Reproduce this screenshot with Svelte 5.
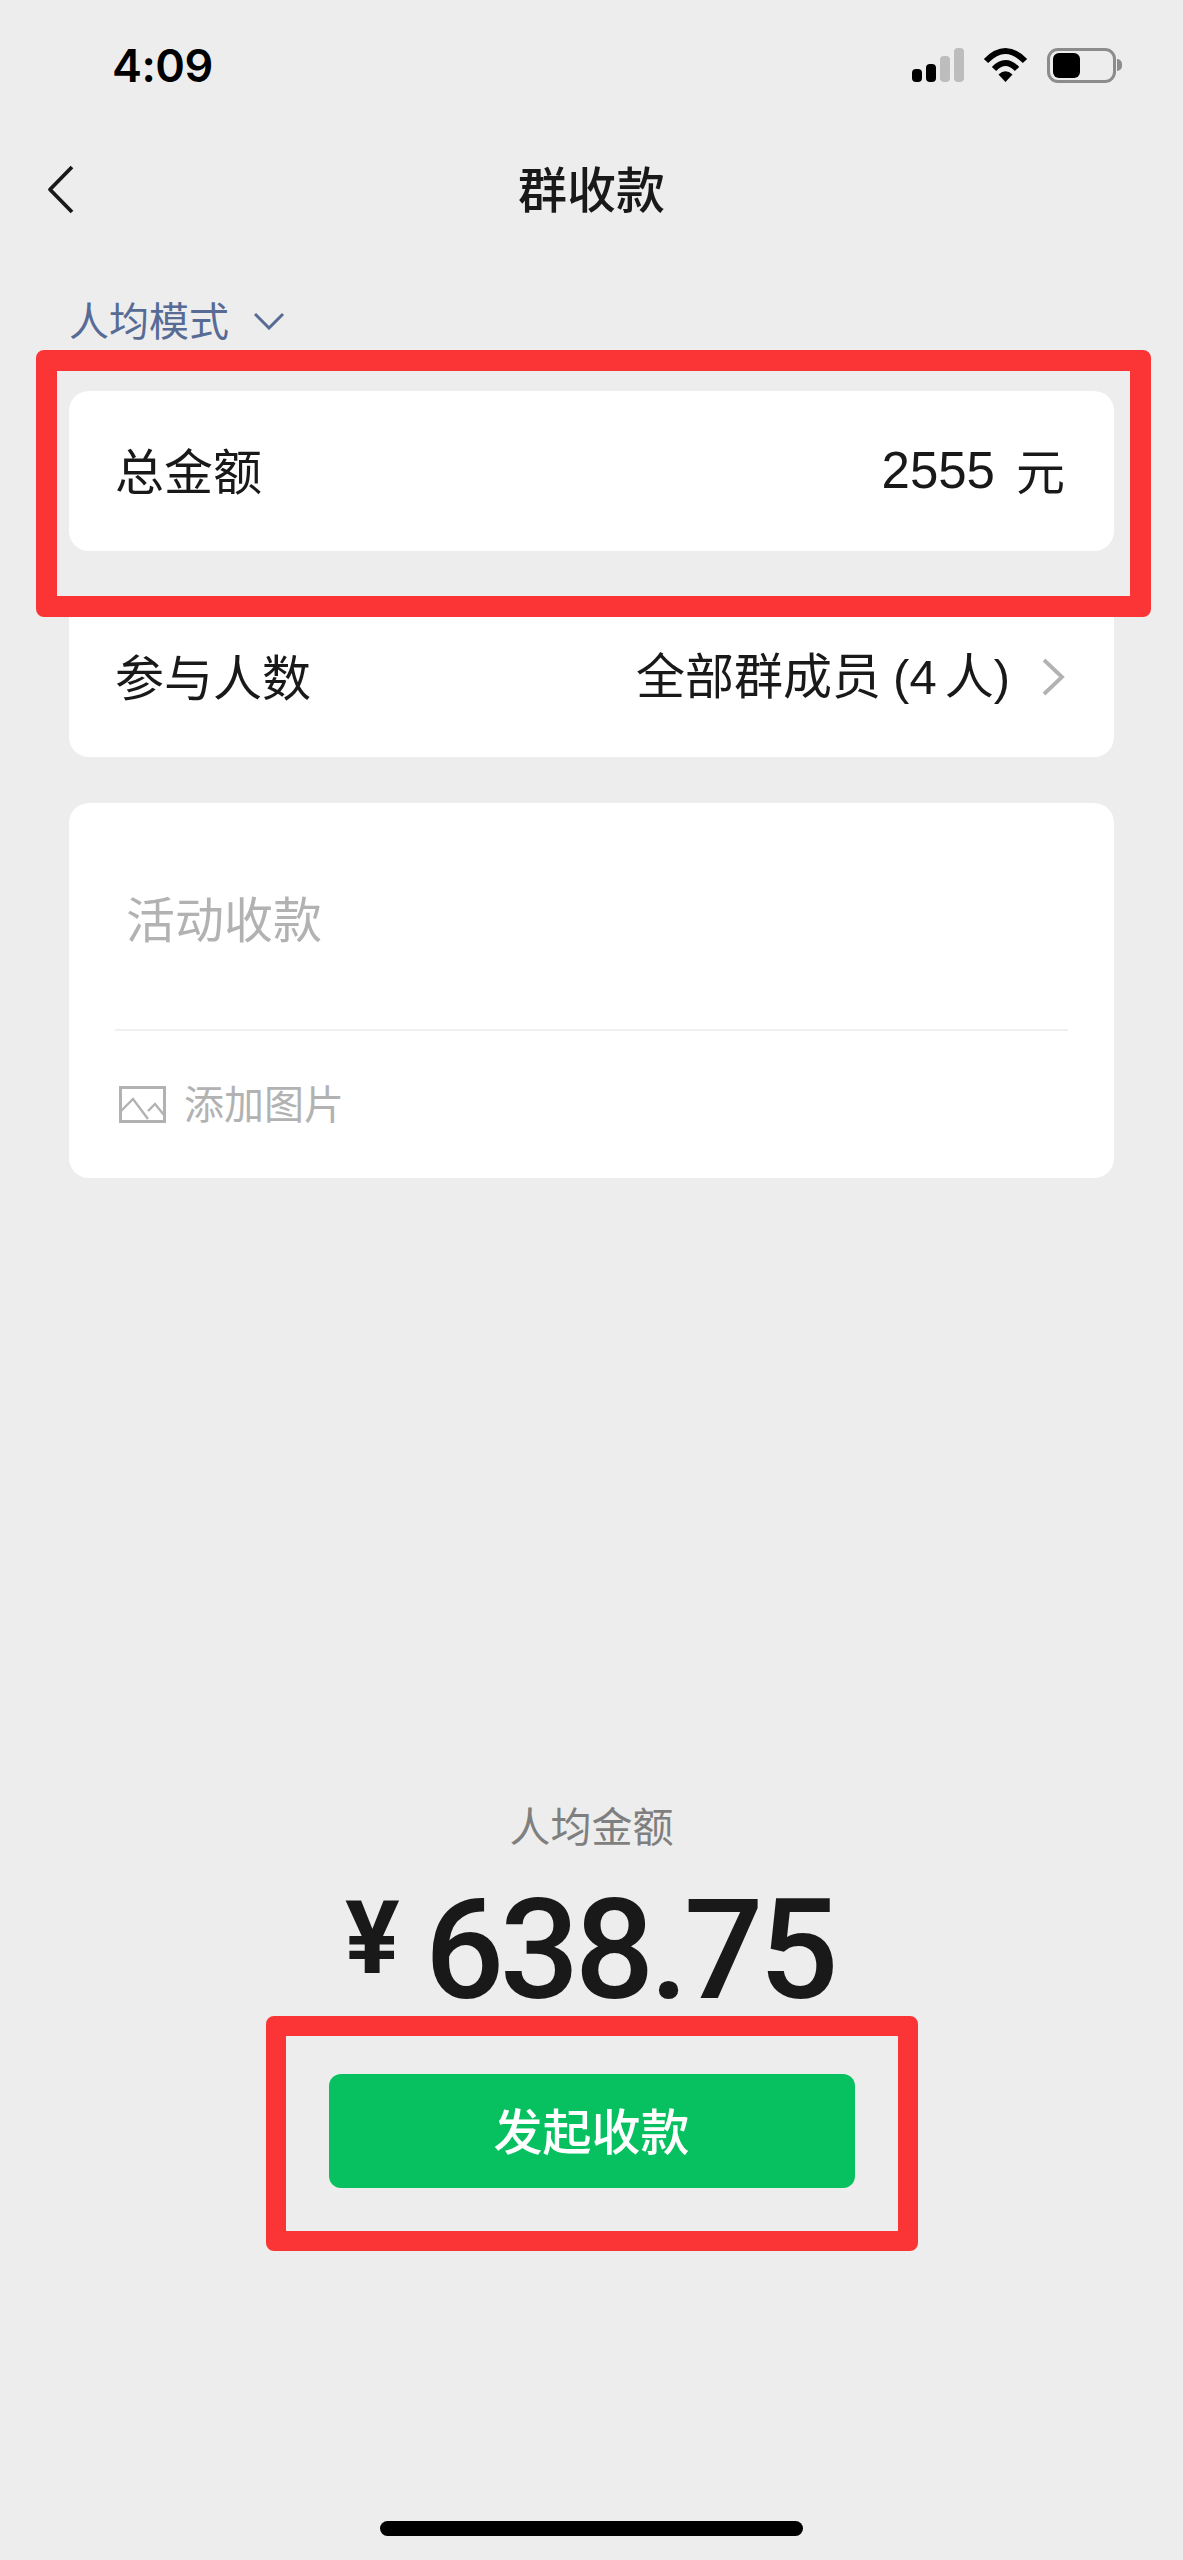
<script lang="ts">
	const signalBars = [
		{ height: 13, on: true },
		{ height: 18, on: true },
		{ height: 26, on: false },
		{ height: 34, on: false }
	];
</script>

<div class="page">
	<header class="status-bar">
		<span class="time">4:09</span>
		<div class="status-icons">
			<div class="signal">
				{#each signalBars as bar}
					<span class="bar" class:on={bar.on} style="height: {bar.height}px"></span>
				{/each}
			</div>
			<svg class="wifi" width="45" height="34" viewBox="0 0 45 34">
				<path d="M3 13Q22.5 -7 42 13" fill="none" stroke="#000" stroke-width="6" />
				<path d="M11 21Q22.5 9 34 21" fill="none" stroke="#000" stroke-width="6" />
				<path d="M15.5 26.5Q22.5 20 29.5 26.5L22.5 34Z" fill="#000" />
			</svg>
			<div class="battery">
				<span class="battery-fill"></span>
			</div>
			<span class="battery-nub"></span>
		</div>
	</header>

	<nav class="nav-bar">
		<svg class="back" width="27" height="49" viewBox="0 0 27 49">
			<path d="M25 2L3 24.5L25 47" fill="none" stroke="#191919" stroke-width="3.8" stroke-linejoin="round" />
		</svg>
		<h1>群收款</h1>
	</nav>

	<div class="mode">
		<span>人均模式</span>
		<svg width="32" height="18" viewBox="0 0 32 18">
			<path d="M2 2L16 16L30 2" fill="none" stroke="#576b95" stroke-width="3" />
		</svg>
	</div>

	<section class="card row">
		<span>总金额</span>
		<span class="value"><span class="total">2555</span><span class="unit">元</span></span>
	</section>

	<section class="card row">
		<span>参与人数</span>
		<span class="value people">
			<span class="people-text">全部群成员<span class="paren open">(4</span><span class="count-unit">人</span><span class="paren">)</span></span>
			<svg width="24" height="38" viewBox="0 0 24 38">
				<path d="M3 2L21 19L3 36" fill="none" stroke="#b2b2b2" stroke-width="3.8" />
			</svg>
		</span>
	</section>

	<section class="card note">
		<div class="placeholder">活动收款</div>
		<div class="divider"></div>
		<div class="add-image">
			<svg width="47" height="37" viewBox="0 0 47 37">
				<rect x="1.5" y="1.5" width="44" height="34" fill="none" stroke="#b2b2b2" stroke-width="3" />
				<path d="M2 25L14 13L29 33M29 25L36 18L45 29" fill="none" stroke="#b2b2b2" stroke-width="2.4" />
			</svg>
			<span>添加图片</span>
		</div>
	</section>

	<div class="spacer"></div>

	<section class="summary">
		<div class="summary-label">人均金额</div>
		<div class="amount"><span class="currency">¥</span>638.75</div>
		<button type="button" class="submit">发起收款</button>
	</section>

	<div class="home-indicator"></div>

	<div class="highlight highlight-total"></div>
	<div class="highlight highlight-submit"></div>
</div>

<style>
	:global(body) {
		background: #ededed;
	}

	.page {
		position: relative;
		display: flex;
		flex-direction: column;
		width: 1183px;
		height: 2560px;
		overflow: hidden;
		background: #ededed;
		color: #191919;
		font-family: "Liberation Sans", "Noto Sans CJK SC", sans-serif;
	}

	.status-bar {
		display: flex;
		align-items: center;
		justify-content: space-between;
		flex: none;
		height: 130px;
		padding: 0 61px 0 112px;
		box-sizing: border-box;
	}

	.time {
		font-family: Inter, sans-serif;
		font-size: 45px;
		font-weight: 600;
		color: #000;
		letter-spacing: -0.5px;
	}

	.status-icons {
		display: flex;
		align-items: center;
	}

	.signal {
		display: flex;
		align-items: flex-end;
		gap: 4px;
		height: 34px;
	}

	.bar {
		width: 10px;
		border-radius: 4px;
		background: #bdbdbd;
	}

	.bar.on {
		background: #000;
	}

	.wifi {
		margin-left: 19px;
	}

	.battery {
		display: flex;
		align-items: center;
		width: 69px;
		height: 35px;
		margin-left: 19px;
		padding: 0 3px;
		box-sizing: border-box;
		border: 3px solid #8c8c8c;
		border-radius: 11px;
	}

	.battery-fill {
		width: 27px;
		height: 25px;
		border-radius: 6px;
		background: #000;
	}

	.battery-nub {
		width: 5px;
		height: 12px;
		margin-left: 1px;
		border-radius: 0 6px 6px 0;
		background: #8c8c8c;
	}

	.nav-bar {
		display: flex;
		align-items: center;
		justify-content: center;
		position: relative;
		flex: none;
		height: 120px;
		padding-bottom: 6px;
		box-sizing: border-box;
	}

	.back {
		position: absolute;
		left: 47px;
		top: 35px;
	}

	h1 {
		margin: 0;
		font-family: "Noto Sans CJK SC", sans-serif;
		font-size: 49px;
		font-weight: 500;
		line-height: 60px;
	}

	.mode {
		display: flex;
		align-items: center;
		gap: 24px;
		flex: none;
		height: 60px;
		padding: 39px 0 42px 69px;
		color: #576b95;
		font-family: "Noto Sans CJK SC", sans-serif;
		font-size: 40px;
	}

	.mode svg {
		margin-top: 4px;
	}

	.card {
		flex: none;
		margin: 0 69px;
		border-radius: 20px;
		background: #fff;
		font-family: "Noto Sans CJK SC", sans-serif;
	}

	.row {
		display: flex;
		align-items: center;
		justify-content: space-between;
		height: 160px;
		margin-bottom: 46px;
		padding: 0 49px 5px 46px;
		box-sizing: border-box;
		font-size: 49px;
		line-height: 60px;
	}

	.value {
		display: flex;
		align-items: center;
	}

	.total {
		font-family: "Liberation Sans", sans-serif;
		font-size: 51px;
		position: relative;
		top: 2px;
	}

	.unit {
		margin-left: 21px;
	}

	.people {
		gap: 31px;
	}

	.people svg {
		margin-top: 5px;
	}

	.people-text {
		white-space: nowrap;
	}

	.paren {
		font-family: "Liberation Sans", sans-serif;
	}

	.paren.open {
		margin-left: 12px;
	}

	.count-unit {
		margin-left: 8px;
	}

	.note {
		display: flex;
		flex-direction: column;
		height: 375px;
	}

	.placeholder {
		height: 226px;
		padding-left: 57px;
		color: #b2b2b2;
		font-size: 49px;
		line-height: 228px;
		box-sizing: border-box;
	}

	.divider {
		height: 2px;
		margin: 0 46px;
		background: #f0f0f0;
	}

	.add-image {
		display: flex;
		align-items: center;
		gap: 18px;
		height: 147px;
		padding-left: 50px;
		color: #b2b2b2;
		font-size: 40px;
	}

	.add-image span {
		margin-top: -6px;
	}

	.spacer {
		flex: 1;
	}

	.summary {
		display: flex;
		flex-direction: column;
		align-items: center;
		flex: none;
	}

	.summary-label {
		color: #7f7f7f;
		font-family: "Noto Sans CJK SC", sans-serif;
		font-size: 41px;
		line-height: 56px;
		margin-bottom: 4px;
	}

	.amount {
		display: flex;
		align-items: center;
		height: 188px;
		margin-left: -4px;
		font-family: Roboto, sans-serif;
		font-size: 140px;
		font-weight: 500;
		letter-spacing: -4.6px;
		line-height: 188px;
	}

	.currency {
		margin-right: 25px;
		font-size: 102px;
		font-weight: 700;
		letter-spacing: 0;
		line-height: 188px;
		position: relative;
		top: -12px;
	}

	.submit {
		width: 526px;
		height: 114px;
		margin-top: 30px;
		padding: 0 0 5px;
		border: none;
		border-radius: 12px;
		background: #07c160;
		color: #fff;
		font-family: "Noto Sans CJK SC", sans-serif;
		font-size: 49px;
		font-weight: 500;
	}

	.home-indicator {
		flex: none;
		width: 423px;
		height: 15px;
		margin: 333px auto 24px;
		border-radius: 8px;
		background: #000;
	}

	.highlight {
		position: absolute;
		box-sizing: border-box;
		border: 21px solid #fb3535;
		border-radius: 8px;
	}

	.highlight-total {
		left: 36px;
		top: 350px;
		width: 1115px;
		height: 267px;
	}

	.highlight-submit {
		left: 266px;
		top: 2016px;
		width: 652px;
		height: 235px;
		border-width: 20px;
	}
</style>
